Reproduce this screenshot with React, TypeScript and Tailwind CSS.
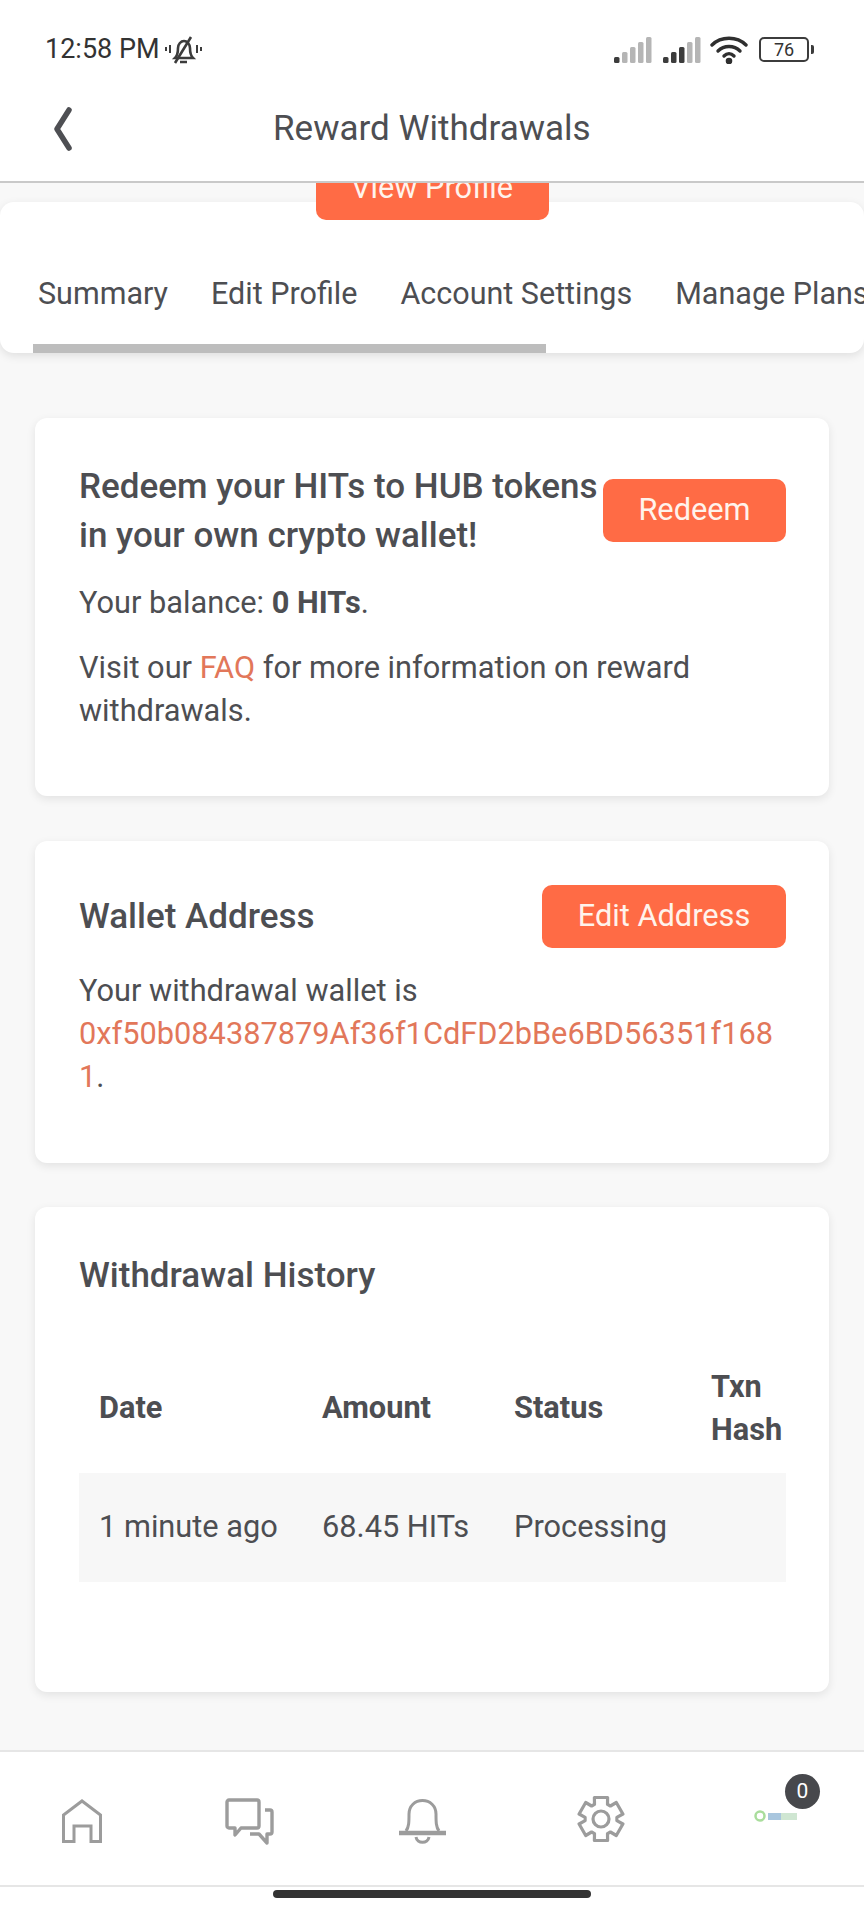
import { ReactNode } from "react";

const tabs = ["Summary", "Edit Profile", "Account Settings", "Manage Plans"];

function Card({ className, children }: { className: string; children: ReactNode }) {
  return (
    <section className={`mx-[35px] rounded-[12px] bg-white pl-[44px] pr-[43px] shadow-[0_3px_10px_rgba(0,0,0,0.09)] ${className}`}>
      {children}
    </section>
  );
}

function OrangeButton({ label, className }: { label: string; className: string }) {
  return (
    <button className={`flex h-[63px] items-center justify-center rounded-[10px] bg-[#ff6b45] text-[30.75px] text-[#fff3ec] ${className}`}>
      {label}
    </button>
  );
}

function Signal({ bars }: { bars: number }) {
  const heights = [6, 11, 16, 21, 26];
  return (
    <svg width="38" height="26" viewBox="0 0 38 26">
      {heights.map((h, i) => (
        <rect key={i} x={i * 8} y={26 - h} width="5.5" height={h} rx="1.5" fill={i < bars ? "#3c3c3c" : "#b5b5b5"} />
      ))}
    </svg>
  );
}

function StatusBar() {
  return (
    <div className="flex h-[96px] items-center justify-between pl-[45px] pr-[50px] pt-[3px] text-[27px] text-[#333]">
      <div className="flex items-center gap-[4px]">
        <span>12:58 PM</span>
        <svg width="38" height="32" viewBox="0 0 38 32" fill="none" stroke="#3c3c3c" strokeWidth="2.6">
          <path d="M11 24c3-3 3-7 3-10 0-4 3-7 6-7s6 3 6 7c0 4 0 7 3 10z" />
          <path d="M16 28h7M27 3 11 29" />
          <path d="M6 11v8M2 13v4M33 11v8M37 13v4" strokeWidth="2" />
        </svg>
      </div>
      <div className="flex items-center">
        <Signal bars={1} />
        <span className="w-[11px]" />
        <Signal bars={3} />
        <svg className="ml-[9px]" width="38" height="28" viewBox="0 0 38 28" fill="none" stroke="#2f2f2f" strokeWidth="3.4" strokeLinecap="round">
          <path d="M2 9C11 0 27 0 36 9" />
          <path d="M8 15c6-6 16-6 22 0" />
          <path d="M14 20c3-3 7-3 10 0" />
          <circle cx="19" cy="25" r="1.6" fill="#2f2f2f" />
        </svg>
        <div className="ml-[11px] flex h-[25px] w-[50px] items-center justify-center rounded-[5px] border-[2.5px] border-[#3c3c3c] text-[18px] leading-none text-[#333]">
          76
        </div>
        <div className="ml-[2px] h-[9px] w-[3px] rounded-r-[2px] bg-[#3c3c3c]" />
      </div>
    </div>
  );
}

function Header() {
  return (
    <header className="relative z-20 bg-white">
      <StatusBar />
      <div className="flex h-[87px] items-center border-b-[2px] border-[#c9c9c9] pb-[20px]">
        <svg className="ml-[51px]" width="24" height="44" viewBox="0 0 24 44" fill="none" stroke="#4e4f53" strokeWidth="5.5" strokeLinecap="round" strokeLinejoin="round">
          <path d="M18 3 6 22l12 19" />
        </svg>
        <h1 className="ml-[198px] text-[35px] leading-none text-[#4d4e52]">Reward Withdrawals</h1>
      </div>
    </header>
  );
}

function TabCard() {
  return (
    <div className="relative -mt-[18px] h-[151px] overflow-hidden rounded-[14px] bg-white shadow-[0_3px_10px_rgba(0,0,0,0.1)]">
      <div className="flex gap-[43px] whitespace-nowrap pl-[38px] pt-[74px] text-[30.5px] leading-[36px] text-[#4d4e52]">
        {tabs.map((t) => (
          <span key={t}>{t}</span>
        ))}
      </div>
      <div className="ml-[33px] mt-[32px] h-[9px] w-[513px] bg-[#bdbdbd]" />
    </div>
  );
}

function HomeIcon() {
  return (
    <svg width="40" height="44" viewBox="0 0 40 44" fill="none" stroke="#9c9c9c" strokeWidth="3">
      <path d="M1.5 42.5V16L20 2l18.5 14v26.5H29V27H12v15.5z" />
    </svg>
  );
}

function ChatIcon() {
  return (
    <svg width="49" height="47" viewBox="0 0 49 47" fill="none" stroke="#9c9c9c" strokeWidth="3.4" strokeLinejoin="round">
      <path d="M4 2h28a2 2 0 0 1 2 2v24a2 2 0 0 1-2 2H16l-6 7v-7H4a2 2 0 0 1-2-2V4a2 2 0 0 1 2-2z" />
      <path d="M40 12h5a2 2 0 0 1 2 2v20a2 2 0 0 1-2 2h-3v9l-8-9h-9" />
    </svg>
  );
}

function BellIcon() {
  return (
    <svg width="47" height="45" viewBox="0 0 47 45" fill="none" stroke="#9c9c9c" strokeWidth="3">
      <path d="M7 32c3-4 3-9 3-17C10 7 16 1.5 23.5 1.5S37 7 37 15c0 8 0 13 3 17" />
      <path d="M0 34h47" strokeWidth="4.5" />
      <path d="M17 38c1 7 12 7 13 0" />
    </svg>
  );
}

// six teeth around the hub, worked out instead of typed by hand
function gearPath() {
  const cx = 24;
  const cy = 24;
  const pts: string[] = [];
  for (let i = 0; i < 6; i++) {
    const a = (i * Math.PI) / 3 - Math.PI / 2;
    const p = (r: number, d: number) => `${(cx + r * Math.cos(a + d)).toFixed(1)} ${(cy + r * Math.sin(a + d)).toFixed(1)}`;
    pts.push(p(16, -0.42), p(22.5, -0.3), p(22.5, 0.3), p(16, 0.42));
  }
  return `M${pts.join("L")}Z`;
}

function GearIcon() {
  return (
    <svg width="48" height="48" viewBox="0 0 48 48" fill="none" stroke="#9c9c9c" strokeWidth="3.2" strokeLinejoin="round">
      <path d={gearPath()} />
      <circle cx="24" cy="24" r="8" />
    </svg>
  );
}

function BottomNav() {
  return (
    <nav className="mt-[58px] flex h-[137px] items-center border-y-[2px] border-[#e6e6e6] bg-white pl-[62px] pt-[5px]">
      <HomeIcon />
      <span className="ml-[123px]"><ChatIcon /></span>
      <span className="ml-[125px]"><BellIcon /></span>
      <span className="ml-[131px] -mt-[4px]"><GearIcon /></span>
      <div className="relative ml-[129px] -mt-[10px]">
        <svg width="45" height="14" viewBox="0 0 45 14">
          <circle cx="6" cy="7" r="4.5" fill="none" stroke="#a9dd9c" strokeWidth="2.5" />
          <rect x="14" y="4" width="13" height="7" fill="#a9c6de" />
          <rect x="27" y="4" width="16" height="7" fill="#cfe6d2" />
        </svg>
        <span className="absolute -top-[35px] left-[31px] flex h-[35px] w-[35px] items-center justify-center rounded-full bg-[#47484c] text-[21px] text-white">
          0
        </span>
      </div>
    </nav>
  );
}

export default function App() {
  return (
    <div className="flex h-[1920px] w-[864px] flex-col overflow-hidden bg-[#f8f8f8] font-['Roboto',sans-serif] text-[#4d4e52]">
      <Header />
      <div className="relative z-10 -mt-[26px] flex justify-center">
        <OrangeButton label="View Profile" className="w-[233px]" />
      </div>
      <TabCard />

      <Card className="mt-[65px] h-[378px] pt-[44px]">
        <div className="flex items-start">
          <h2 className="w-[524px] shrink-0 text-[35px] font-medium leading-[49px]">
            Redeem your HITs to HUB tokens in your own crypto wallet!
          </h2>
          <OrangeButton label="Redeem" className="mt-[17px] w-[183px] shrink-0" />
        </div>
        <p className="mt-[21px] text-[30.75px] leading-[43px]">
          Your balance: <strong className="font-bold">0 HITs</strong>.
        </p>
        <p className="mt-[22px] text-[30.75px] leading-[43px]">
          Visit our <span className="text-[#e2775a]">FAQ</span> for more information on reward withdrawals.
        </p>
      </Card>

      <Card className="mt-[45px] h-[322px] pt-[44px]">
        <div className="flex items-center justify-between">
          <h2 className="text-[35px] font-medium leading-[60px]">Wallet Address</h2>
          <OrangeButton label="Edit Address" className="w-[244px]" />
        </div>
        <p className="mt-[21px] break-all text-[30.75px] leading-[43px]">
          <span className="block">Your withdrawal wallet is</span>
          <span className="text-[#e2775a]">0xf50b084387879Af36f1CdFD2bBe6BD56351f1681</span>.
        </p>
      </Card>

      <Card className="mt-[44px] h-[485px] pt-[46px]">
        <h2 className="text-[35px] font-medium leading-[46px]">Withdrawal History</h2>
        <table className="mt-[43px] w-full table-fixed text-left text-[30.75px]">
          <colgroup>
            <col className="w-[223px]" />
            <col className="w-[192px]" />
            <col className="w-[197px]" />
            <col />
          </colgroup>
          <thead>
            <tr className="h-[131px] leading-[43px]">
              <th className="pl-[20px] font-bold">Date</th>
              <th className="pl-[20px] font-bold">Amount</th>
              <th className="pl-[20px] font-bold">Status</th>
              <th className="pl-[20px] font-bold">Txn Hash</th>
            </tr>
          </thead>
          <tbody>
            <tr className="h-[109px] bg-[#f7f7f7]">
              <td className="whitespace-nowrap pl-[20px]">1 minute ago</td>
              <td className="whitespace-nowrap pl-[20px]">68.45 HITs</td>
              <td className="pl-[20px]">Processing</td>
              <td />
            </tr>
          </tbody>
        </table>
      </Card>

      <BottomNav />
      <div className="flex flex-1 items-start justify-center bg-white pt-[3px]">
        <div className="h-[8px] w-[318px] rounded-full bg-[#333]" />
      </div>
    </div>
  );
}
